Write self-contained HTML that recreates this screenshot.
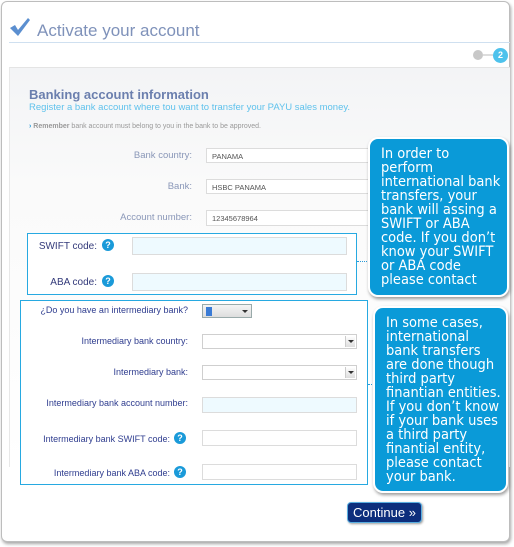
<!DOCTYPE html>
<html><head><meta charset="utf-8"><style>
*{margin:0;padding:0;box-sizing:border-box}
body{width:514px;height:547px;background:#fff;font-family:"Liberation Sans",Arial,sans-serif;position:relative;overflow:hidden}
.a{position:absolute}
.card{left:1px;top:1px;width:509px;height:541px;border:1px solid #bdbdbd;border-radius:6px;box-shadow:1px 2px 3px rgba(0,0,0,.35);background:#fff}
.lbl{position:absolute;font-size:9.5px;color:#8a97b8;text-align:right}
.lbl2{position:absolute;font-size:9px;color:#2f3d8f;text-align:right}
.in{position:absolute;border:1px solid #dcdcdc;background:#fff;font-size:7.5px;color:#555;padding:3px 5px}
.blue{background:#eefaff}
.q{position:absolute;width:12px;height:12px;border-radius:50%;background:#1a9ad9;color:#fff;font-size:9px;font-weight:bold;text-align:center;line-height:12px}
.tip{position:absolute;background:#0a9ad8;border-radius:10px;border:2px solid #fff;box-shadow:1px 2px 3px rgba(0,0,0,.4);color:#fff;font-family:"DejaVu Sans Condensed","DejaVu Sans",sans-serif;font-size:14.5px;line-height:14px;white-space:nowrap}
.sel{position:absolute;border:1px solid #cfcfcf;background:#fff}
.sel i{position:absolute;right:1px;top:1px;width:10px;height:11px;background:linear-gradient(#fff,#ddd);border-left:1px solid #ccc}
.sel i:after{content:"";position:absolute;left:2px;top:4px;border-left:3px solid transparent;border-right:3px solid transparent;border-top:3px solid #333}
</style></head><body>
<div class="a card"></div>
<svg class="a" style="left:9px;top:17px" width="22" height="20" viewBox="0 0 22 20"><path d="M1 11 L6 8 L9 13 L19 1 L21 3 L9 19 Z" fill="#5b8fd0"/></svg>
<div class="a" style="left:37px;top:21px;font-size:17px;color:#7f92ba">Activate your account</div>
<div class="a" style="left:9px;top:42px;width:501px;height:1px;background:#cfe0f0"></div>
<div class="a" style="left:473px;top:50px;width:10px;height:10px;border-radius:50%;background:#c8c8c8"></div>
<div class="a" style="left:483px;top:54px;width:10px;height:2px;background:#ddd"></div>
<div class="a" style="left:493px;top:48px;width:15px;height:15px;border-radius:50%;background:#4ec2ec;color:#fff;font-size:9px;font-weight:bold;text-align:center;line-height:15px">2</div>
<div class="a" style="left:9px;top:67px;width:501px;height:400px;background:linear-gradient(#f3f4f6,#fafafa 30%,#fff);border-top:1px solid #e4e4e4;border-left:1px solid #e8e8e8"></div>
<div class="a" style="left:29px;top:87px;font-size:13px;font-weight:bold;color:#6b7fae">Banking account information</div>
<div class="a" style="left:29px;top:102px;font-size:9.5px;color:#5fc2ec">Register a bank account where tou want to transfer your PAYU sales money.</div>
<div class="a" style="left:29px;top:123px;font-size:7px;color:#999"><b style="color:#2a9bd8">›</b> <b>Remember</b> bank account must belong to you in the bank to be approved.</div>
<div class="lbl" style="right:322px;top:150px">Bank country:</div>
<div class="in" style="left:206px;top:148px;width:170px;height:15px">PANAMA</div>
<div class="lbl" style="right:322px;top:181px">Bank:</div>
<div class="in" style="left:206px;top:179px;width:170px;height:15px">HSBC PANAMA</div>
<div class="lbl" style="right:322px;top:212px">Account number:</div>
<div class="in" style="left:206px;top:210px;width:170px;height:16px">12345678964</div>
<div class="a" style="left:27px;top:233px;width:330px;height:62px;border:1px solid #27a9e1;background:#fff"></div>
<div class="lbl2" style="right:417px;top:241px;font-size:10px;color:#333a7a">SWIFT code:</div>
<div class="q" style="left:102px;top:239px">?</div>
<div class="in blue" style="left:132px;top:237px;width:215px;height:18px"></div>
<div class="lbl2" style="right:417px;top:277px;font-size:10px;color:#333a7a">ABA code:</div>
<div class="q" style="left:102px;top:275px">?</div>
<div class="in blue" style="left:132px;top:273px;width:215px;height:18px"></div>
<div class="a" style="left:357px;top:261px;width:12px;border-top:1px dotted #2a9bd8"></div>
<div class="a" style="left:20px;top:300px;width:348px;height:185px;border:1px solid #27a9e1;background:#fff"></div>
<div class="lbl2" style="right:326px;top:305px">¿Do you have an intermediary bank?</div>
<div class="sel" style="left:202px;top:304px;width:50px;height:14px;background:linear-gradient(#f4f4f4,#ddd);border-color:#9aa"><span style="position:absolute;left:3px;top:2px;width:6px;height:9px;background:#3a7bd5"></span><i style="background:none;border:none"></i></div>
<div class="lbl2" style="right:326px;top:336px">Intermediary bank country:</div>
<div class="sel" style="left:202px;top:334px;width:155px;height:15px"><i></i></div>
<div class="lbl2" style="right:326px;top:367px">Intermediary bank:</div>
<div class="sel" style="left:202px;top:365px;width:155px;height:15px"><i></i></div>
<div class="lbl2" style="right:326px;top:398px">Intermediary bank account number:</div>
<div class="in blue" style="left:202px;top:397px;width:155px;height:16px"></div>
<div class="lbl2" style="right:344px;top:434px">Intermediary bank SWIFT code:</div>
<div class="q" style="left:174px;top:432px">?</div>
<div class="in" style="left:202px;top:430px;width:155px;height:16px"></div>
<div class="lbl2" style="right:344px;top:468px">Intermediary bank ABA code:</div>
<div class="q" style="left:174px;top:466px">?</div>
<div class="in" style="left:202px;top:464px;width:155px;height:16px"></div>
<div class="a" style="left:368px;top:384px;width:8px;border-top:1px dotted #2a9bd8"></div>
<div class="tip" style="left:368px;top:137px;width:141px;height:160px;padding:8px 0 0 11px">In order to<br>perform<br>international bank<br>transfers, your<br>bank will assing a<br>SWIFT or ABA<br>code. If you don’t<br>know your SWIFT<br>or ABA code<br>please contact</div>
<div class="tip" style="left:373px;top:306px;width:135px;height:187px;padding:8px 0 0 11px">In some cases,<br>international<br>bank transfers<br>are done though<br>third party<br>finantian entities.<br>If you don’t know<br>if your bank uses<br>a third party<br>finantial entity,<br>please contact<br>your bank.</div>
<div class="a" style="left:347px;top:502px;width:75px;height:21px;background:#0d2e7c;border:1px solid #5aaee0;border-radius:4px;box-shadow:1px 1px 2px rgba(0,0,0,.4);color:#fff;font-size:13px;text-align:center;line-height:19px">Continue »</div>
</body></html>
